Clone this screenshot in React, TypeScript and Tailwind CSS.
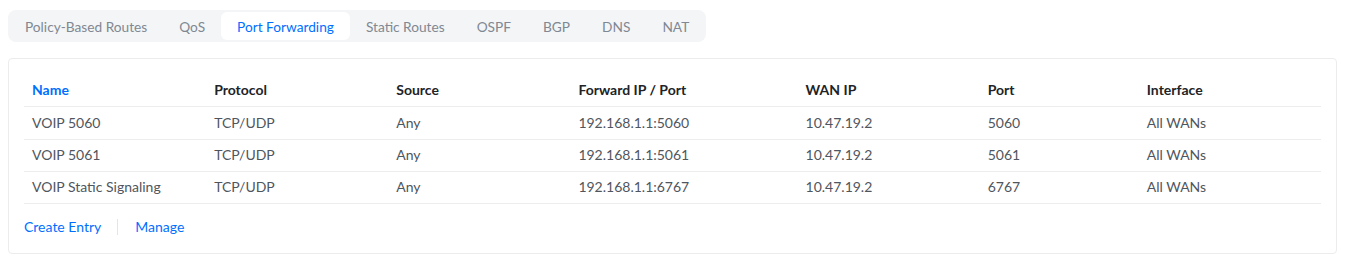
const tabs = ['Policy-Based Routes', 'QoS', 'Port Forwarding', 'Static Routes', 'OSPF', 'BGP', 'DNS', 'NAT'];

const columns = [
    {label: 'Name', w: 'w-[182px]'},
    {label: 'Protocol', w: 'w-[182px]'},
    {label: 'Source', w: 'w-[182px]'},
    {label: 'Forward IP / Port', w: 'w-[227px]'},
    {label: 'WAN IP', w: 'w-[182px]'},
    {label: 'Port', w: 'w-[159px]'},
    {label: 'Interface', w: 'w-[182px]'},
];

const rows = [
    ['VOIP 5060', 'TCP/UDP', 'Any', '192.168.1.1:5060', '10.47.19.2', '5060', 'All WANs'],
    ['VOIP 5061', 'TCP/UDP', 'Any', '192.168.1.1:5061', '10.47.19.2', '5061', 'All WANs'],
    ['VOIP Static Signaling', 'TCP/UDP', 'Any', '192.168.1.1:6767', '10.47.19.2', '6767', 'All WANs'],
];

export default function App() {
    return (
        <main className="bg-white min-h-[274px] px-2 pt-[10px] font-['Lato','Liberation_Sans',sans-serif] text-sm">
            {/* onglets */}
            <div className="inline-flex items-center rounded-lg bg-[#f4f5f6] px-px py-[2px] text-[13.7px]">
                {tabs.map((t) => (
                    <div
                        key={t}
                        className={
                            t === 'Port Forwarding'
                                ? 'h-7 px-4 pt-px flex items-center rounded-md bg-white text-[#006fff]'
                                : 'h-7 px-4 pt-px flex items-center text-[#808893]'
                        }
                    >
                        {t}
                    </div>
                ))}
            </div>

            <div className="mt-4 rounded border border-[#ebecee] px-[15px] pt-[15px] pb-[15px]">
                <table className="w-full border-collapse table-fixed">
                    <thead>
                        <tr className="h-8 border-b border-[#ededf0]">
                            {columns.map((c, i) => (
                                <th
                                    key={c.label}
                                    className={`${c.w} px-2 text-left font-bold ${i === 0 ? 'text-[#006fff]' : 'text-[#212327]'}`}
                                >
                                    {c.label}
                                </th>
                            ))}
                        </tr>
                    </thead>
                    <tbody>
                        {rows.map((r, ri) => (
                            <tr key={r[0]} className={`${ri === 0 ? 'h-[33px]' : 'h-8'} border-b border-[#ededf0]`}>
                                {r.map((cell, i) => (
                                    <td key={i} className="px-2 text-[#50565e]">
                                        {cell}
                                    </td>
                                ))}
                            </tr>
                        ))}
                    </tbody>
                </table>

                <div className="flex items-center pt-[13px] h-[34px] text-[#006fff]">
                    <span>Create Entry</span>
                    <span className="ml-4 mr-[17px] h-4 w-px bg-[#e4e5e7]" />
                    <span>Manage</span>
                </div>
            </div>
        </main>
    );
}
